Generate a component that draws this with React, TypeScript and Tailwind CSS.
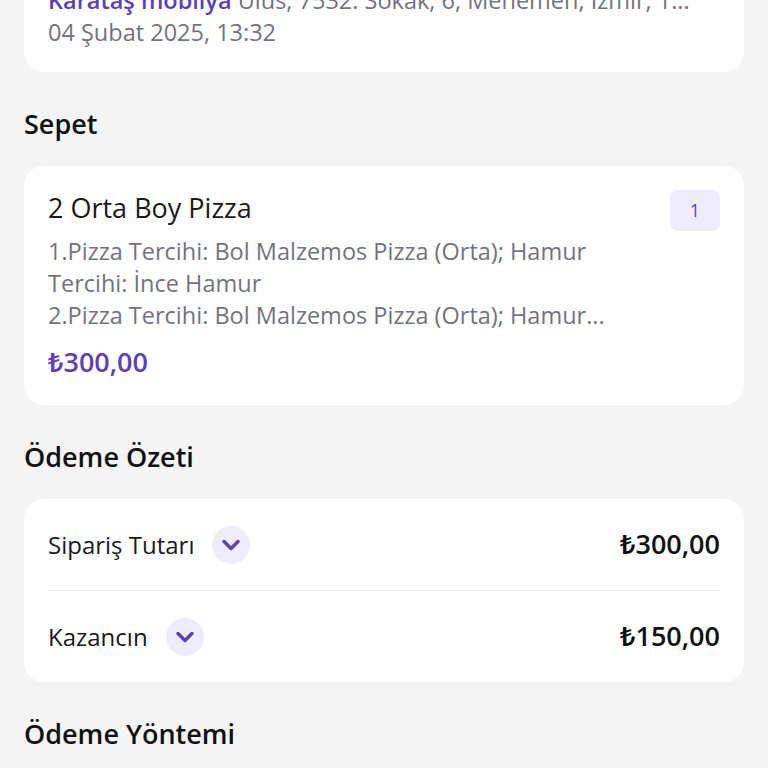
import { ChevronDown } from 'lucide-react';

const font = { fontFamily: '"Open Sans", "Noto Sans", sans-serif' };

function SectionTitle({ children }: { children: string }) {
  return (
    <h2 className="mt-9 mb-[26px] text-[27px] leading-8 font-semibold text-[#111]">{children}</h2>
  );
}

function SummaryRow({ label, amount }: { label: string; amount: string }) {
  return (
    <div className="h-[91px] flex items-center justify-between">
      <div className="flex items-center gap-[18px]">
        <span className="text-[24px] text-[#1a1a1a]">{label}</span>
        <span className="w-[38px] h-[38px] rounded-full bg-[#efecfa] flex items-center justify-center">
          <ChevronDown size={28} strokeWidth={3} className="text-[#5d3ebd]" />
        </span>
      </div>
      <span className="text-[27px] font-semibold text-[#111]">{amount}</span>
    </div>
  );
}

export default function App() {
  return (
    <div className="min-h-[768px] bg-[#f4f4f4] px-6 overflow-hidden" style={font}>
      {/* Order info card (scrolled partly off screen) */}
      <div className="-mt-[40px] bg-white rounded-[20px] px-6 pt-6 pb-6">
        <p className="text-[23.5px] leading-8 truncate">
          <span className="text-[#5d3ebd] font-semibold">Karataş mobilya</span>
          <span className="text-[#74737c]"> Ulus, 7532. Sokak, 6, Menemen, İzmir, 1...</span>
        </p>
        <p className="text-[23.5px] leading-8 text-[#74737c]">04 Şubat 2025, 13:32</p>
      </div>

      <SectionTitle>Sepet</SectionTitle>
      <div className="bg-white rounded-[20px] px-6 pt-6 pb-[27px]">
        <div className="flex items-start justify-between">
          <h3 className="text-[27px] leading-9 text-[#1a1a1a]">2 Orta Boy Pizza</h3>
          <span className="w-[50px] h-[41px] rounded-lg bg-[#efecfa] flex items-center justify-center text-[18px] text-[#5d3ebd]">
            1
          </span>
        </div>
        <div className="mt-1 text-[23.5px] leading-8 text-[#74737c]">
          <p>1.Pizza Tercihi: Bol Malzemos Pizza (Orta); Hamur</p>
          <p>Tercihi: İnce Hamur</p>
          <p>2.Pizza Tercihi: Bol Malzemos Pizza (Orta); Hamur...</p>
        </div>
        <p className="mt-[15px] text-[27px] leading-8 font-semibold text-[#5d3ebd]">₺300,00</p>
      </div>

      <SectionTitle>Ödeme Özeti</SectionTitle>
      <div className="bg-white rounded-[20px] px-6">
        <SummaryRow label="Sipariş Tutarı" amount="₺300,00" />
        <div className="h-px bg-[#ececef]" />
        <SummaryRow label="Kazancın" amount="₺150,00" />
      </div>

      <SectionTitle>Ödeme Yöntemi</SectionTitle>
    </div>
  );
}
